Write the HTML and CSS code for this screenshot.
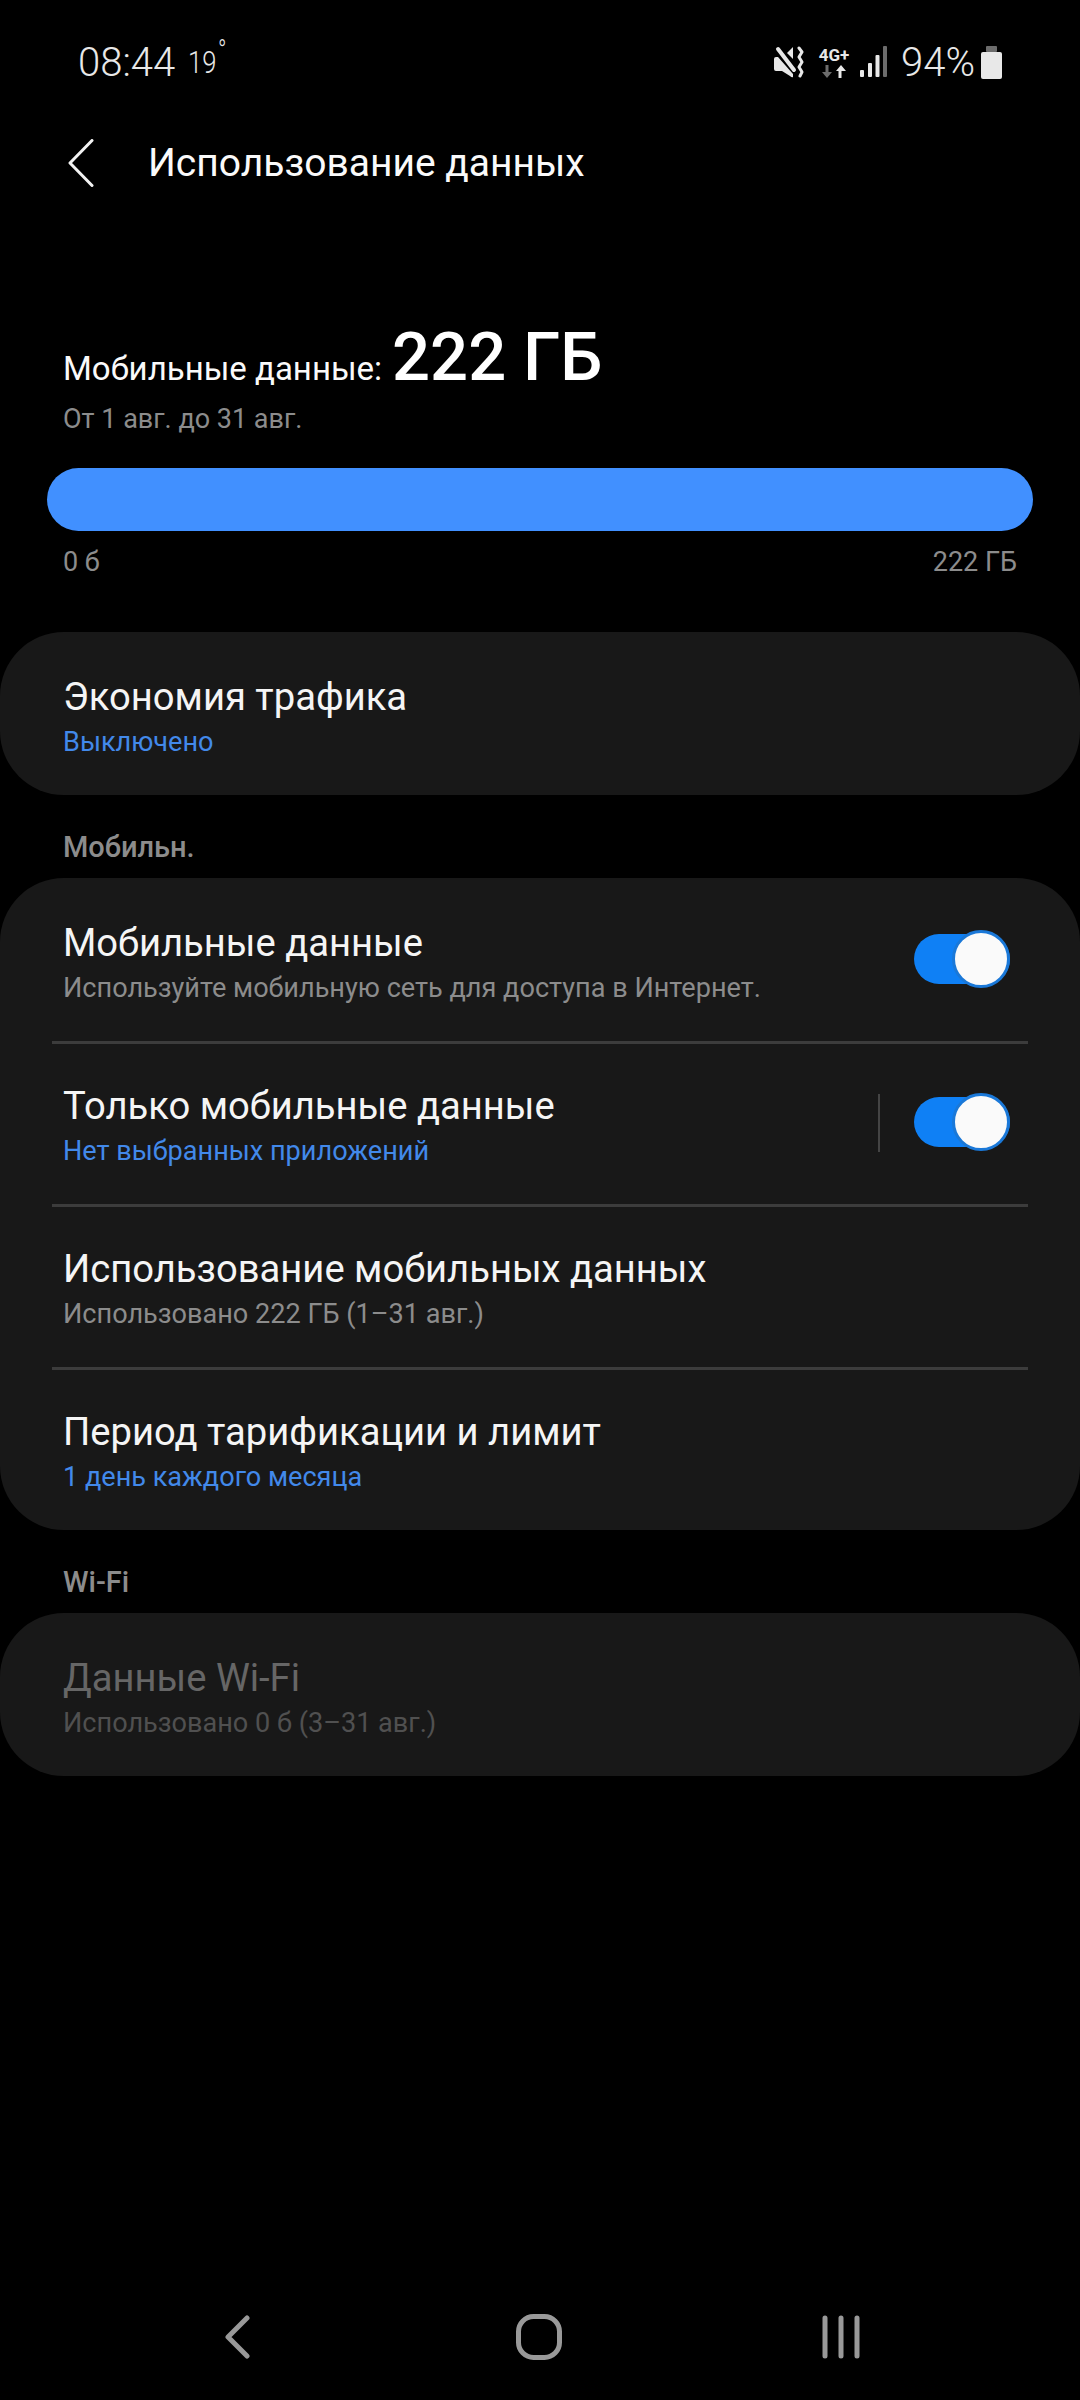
FILE: index.html
```html
<!DOCTYPE html>
<html lang="ru">
<head>
<meta charset="utf-8">
<title>Использование данных</title>
<link rel="stylesheet" href="styles.css">
</head>
<body>
<div class="status">
  <div class="status-left"><span class="time">08:44</span><span class="temp">19<span class="deg">°</span></span></div>
  <div class="status-right">
    <svg class="ic-mute" width="30" height="32" viewBox="0 0 30 32"><path fill="#e8e8e8" d="M0 13q0-2 2-2h2l15 17v3q-1 1-3-1l-8-5H2q-2 0-2-2z"/><path stroke="#e8e8e8" stroke-width="4" stroke-linecap="round" d="M4 3l16 21"/><path fill="#e8e8e8" d="M13 7l6-6v12z"/><path fill="none" stroke="#e8e8e8" stroke-width="3" stroke-linecap="round" stroke-linejoin="round" d="M25 2l3 4-3 5 3 5-3 5 3 5-2 4"/></svg>
    <div class="net"><span class="net-label">4G+</span>
      <svg width="24" height="13" viewBox="0 0 24 13"><path fill="#6c6c6c" d="M3.500 0h3v7H10l-5 6-5-6h3.500z"/><path fill="#e8e8e8" d="M16.500 13h3V6H24l-5-6-5 6h2.500z"/></svg>
    </div>
    <svg class="ic-signal" width="27" height="32" viewBox="0 0 27 32"><rect x="0" y="24" width="4" height="7" rx="1" fill="#e8e8e8"/><rect x="8" y="17" width="4" height="14" rx="1" fill="#e8e8e8"/><rect x="15.500" y="9" width="4" height="22" rx="1" fill="#e8e8e8"/><rect x="23" y="0" width="4" height="31" rx="1" fill="#6c6c6c"/></svg>
    <span class="pct">94%</span>
    <svg class="ic-bat" width="21" height="33" viewBox="0 0 21 33"><rect x="5" y="0" width="11" height="6" rx="1" fill="#6c6c6c"/><rect x="0" y="6" width="21" height="27" rx="2" fill="#e8e8e8"/></svg>
  </div>
</div>

<header class="header">
  <svg class="back" width="26" height="48" viewBox="0 0 26 48"><path d="M24 1.500 2 24l22 22.500" fill="none" stroke="#f2f2f2" stroke-width="3" stroke-linecap="round" stroke-linejoin="round"/></svg>
  <h1 class="title">Использование данных</h1>
</header>

<section class="summary">
  <div class="total"><span class="total-label">Мобильные данные:</span> <span class="total-value">222 ГБ</span></div>
  <div class="period">От 1 авг. до 31 авг.</div>
  <div class="bar"></div>
  <div class="scale"><span>0 б</span><span>222 ГБ</span></div>
</section>

<section class="card card-first">
  <div class="row">
    <div class="row-text"><div class="row-title">Экономия трафика</div><div class="row-sub blue">Выключено</div></div>
  </div>
</section>

<div class="section-label">Мобильн.</div>
<section class="card">
  <div class="row">
    <div class="row-text"><div class="row-title">Мобильные данные</div><div class="row-sub">Используйте мобильную сеть для доступа в Интернет.</div></div>
    <div class="switch"><span class="knob"></span></div>
  </div>
  <div class="sep"></div>
  <div class="row">
    <div class="row-text"><div class="row-title">Только мобильные данные</div><div class="row-sub blue">Нет выбранных приложений</div></div>
    <span class="vline"></span>
    <div class="switch"><span class="knob"></span></div>
  </div>
  <div class="sep"></div>
  <div class="row">
    <div class="row-text"><div class="row-title">Использование мобильных данных</div><div class="row-sub">Использовано 222 ГБ (1–31 авг.)</div></div>
  </div>
  <div class="sep"></div>
  <div class="row">
    <div class="row-text"><div class="row-title">Период тарификации и лимит</div><div class="row-sub blue">1 день каждого месяца</div></div>
  </div>
</section>

<div class="section-label">Wi-Fi</div>
<section class="card disabled">
  <div class="row">
    <div class="row-text"><div class="row-title">Данные Wi-Fi</div><div class="row-sub">Использовано 0 б (3–31 авг.)</div></div>
  </div>
</section>

<nav class="nav">
  <svg class="nav-back" width="26" height="44" viewBox="0 0 26 44"><path d="M23 3 4 22l19 19" fill="none" stroke="#999" stroke-width="5" stroke-linecap="round" stroke-linejoin="round"/></svg>
  <svg width="46" height="46" viewBox="0 0 46 46"><rect x="2.500" y="2.500" width="41" height="41" rx="15" fill="none" stroke="#999" stroke-width="5"/></svg>
  <svg width="38" height="44" viewBox="0 0 38 44"><path d="M3 3v38M19 3v38M35 3v38" fill="none" stroke="#999" stroke-width="5" stroke-linecap="round"/></svg>
</nav>
</body>
</html>
```
FILE: styles.css
```css
* { box-sizing: border-box; margin: 0; padding: 0; }
html, body { background: #000; }
body {
  width: 1080px;
  height: 2400px;
  overflow: hidden;
  display: flex;
  flex-direction: column;
  font-family: Roboto, "Liberation Sans", sans-serif;
  color: #f5f5f5;
}
.status {
  height: 122px;
  display: flex;
  align-items: center;
  justify-content: space-between;
  padding: 2px 78px 0 78px;
}
.status-left { display: flex; align-items: baseline; color: #e8e8e8; }
.time { font-size: 40px; font-weight: 300; }
.temp {
  position: relative;
  font-size: 32px;
  font-weight: 300;
  margin-left: 13px;
  transform: translateY(-3px) scaleX(.8);
  transform-origin: left bottom;
}
.deg { position: absolute; left: 100%; top: -9px; margin-left: 2px; font-size: 28px; }
.status-right { display: flex; align-items: center; color: #e8e8e8; }
.ic-mute { margin-right: 14px; }
.net { display: flex; flex-direction: column; align-items: center; width: 32px; margin-right: 10px; }
.net-label { font-size: 17px; font-weight: 700; line-height: 19px; }
.ic-signal { margin-right: 14px; }
.pct { font-size: 40px; font-weight: 300; margin-right: 6px; }
.header {
  height: 82px;
  display: flex;
  align-items: center;
  padding-left: 68px;
}
.back { margin-right: 54px; }
.title { font-size: 39px; font-weight: 400; color: #fafafa; }
.summary { padding: 0 47px; margin-top: 114px; }
.total { padding-left: 16px; display: flex; align-items: baseline; gap: 10px; height: 76px; }
.total-label { font-size: 33px; color: #fafafa; }
.total-value { font-size: 67px; font-weight: 500; color: #fff; }
.period { padding-left: 16px; font-size: 27px; color: #8c8c8c; line-height: 36px; margin-top: 7px; }
.bar { height: 63px; border-radius: 32px; background: #4190ff; margin-top: 31px; }
.scale {
  display: flex;
  justify-content: space-between;
  padding: 0 16px;
  margin-top: 14px;
  font-size: 27px;
  line-height: 34px;
  color: #8c8c8c;
}
.card { background: #181818; border-radius: 64px; flex: none; }
.card-first { margin-top: 53px; }
.row {
  height: 163px;
  display: flex;
  align-items: center;
  padding: 0 70px 0 63px;
}
.row-text { flex: 1; padding-top: 6px; }
.row-title { font-size: 38.2px; line-height: 46px; color: #f5f5f5; }
.row-sub { font-size: 27.1px; line-height: 36px; margin-top: 4px; color: #8c8c8c; }
.blue { color: #4289ea; }
.sep { height: 3px; background: #3c3c3c; margin: 0 52px -3px; }
.section-label {
  padding: 21px 0 0 63px;
  height: 83px;
  display: flex;
  align-items: center;
  font-size: 29px;
  font-weight: 500;
  color: #8c8c8c;
}
.vline { width: 2px; height: 58px; background: #444; margin-right: 34px; }
.switch {
  position: relative;
  width: 96px;
  height: 50px;
  margin-bottom: 2px;
  border-radius: 25px;
  background: #0f80f5;
}
.knob {
  position: absolute;
  right: 0;
  top: -4px;
  width: 58px;
  height: 58px;
  border-radius: 50%;
  background: #fafafa;
  border: 3px solid #1a78d8;
}
.disabled .row-title { color: #666; }
.disabled .row-sub { color: #505050; }
.nav {
  margin-top: auto;
  margin-bottom: 40px;
  display: flex;
  align-items: center;
  gap: 260px;
  padding-left: 224px;
}
.nav-back { margin-right: 6px; }
```
